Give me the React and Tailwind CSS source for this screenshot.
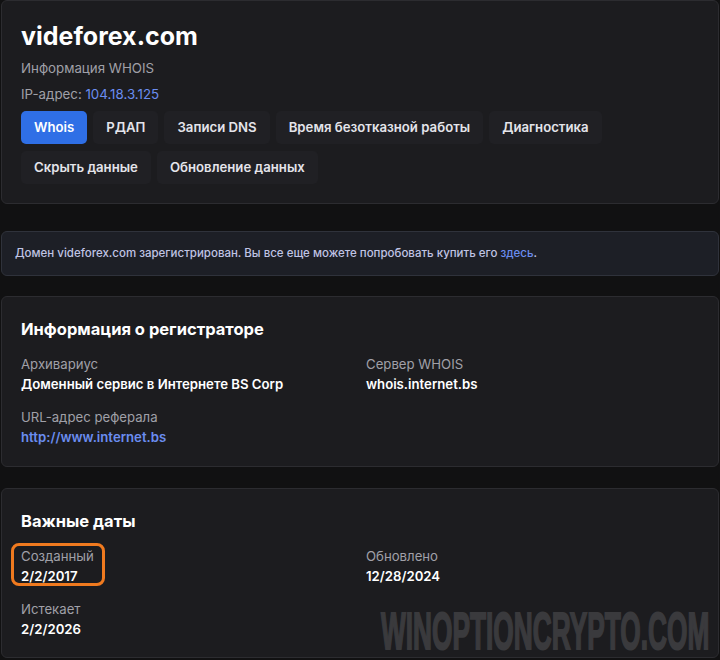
import React from 'react';

const tabRows = [
  ['Whois', 'РДАП', 'Записи DNS', 'Время безотказной работы', 'Диагностика'],
  ['Скрыть данные', 'Обновление данных'],
];

function Field({ label, value, link }) {
  return (
    <div>
      <div className="text-[13.2px] leading-[20px] text-[#a0a0a8]">{label}</div>
      <div className={`text-[13.2px] leading-[20px] font-semibold ${link ? 'text-[#6b8df0]' : 'text-white'}`}>{value}</div>
    </div>
  );
}

export default function App() {
  return (
    <div
      className="relative min-h-[660px] bg-[#111112] flex flex-col"
      style={{ fontFamily: 'Inter, "Noto Sans", sans-serif' }}
    >
      {/* Header card */}
      <div className="mx-[1px] bg-[#1c1c1f] border border-[#2c2c30] rounded-[6px] px-[19px] pt-[15px] pb-[19px]">
        <h1 className="text-[25px] leading-[40px] font-bold text-white">videforex.com</h1>
        <p className="mt-[2px] text-[13.3px] leading-[20px] text-[#a0a0a8]">Информация WHOIS</p>
        <p className="mt-[6px] text-[13.3px] leading-[20px] text-[#a0a0a8]">
          IP-адрес: <span className="text-[#6b8df0]">104.18.3.125</span>
        </p>
        <div className="mt-[7px] flex flex-col gap-[7px]">
          {tabRows.map((row, r) => (
            <div key={r} className="flex gap-[6px]">
              {row.map((t) => (
                <button
                  key={t}
                  className={`h-[33px] px-[13px] rounded-[5px] text-[13.2px] font-semibold ${
                    t === 'Whois' ? 'bg-[#2f6fe6] text-white' : 'bg-[#202024] text-[#e4e4ea]'
                  }`}
                >
                  {t}
                </button>
              ))}
            </div>
          ))}
        </div>
      </div>

      {/* Notice */}
      <div className="mt-[27px] mx-[1px] bg-[#1d1f26] border border-[#2f323b] rounded-[6px] px-[13px] h-[45px] flex items-center">
        <p className="text-[11.5px] font-medium text-[#c0c4e4]">
          Домен videforex.com зарегистрирован. Вы все еще можете попробовать купить его{' '}
          <span className="text-[#6b8df0]">здесь</span>.
        </p>
      </div>

      {/* Registrar */}
      <div className="mt-[20px] mx-[1px] bg-[#1c1c1f] border border-[#2c2c30] rounded-[6px] px-[19px] pt-[18px] pb-[19px]">
        <h2 className="text-[16.5px] leading-[28px] font-bold text-white">Информация о регистраторе</h2>
        <div className="mt-[11px] grid grid-cols-2 gap-x-[12px] gap-y-[13px]">
          <Field label="Архивариус" value="Доменный сервис в Интернете BS Corp" />
          <Field label="Сервер WHOIS" value="whois.internet.bs" />
          <Field label="URL-адрес реферала" value="http://www.internet.bs" link />
        </div>
      </div>

      {/* Dates */}
      <div className="mt-[21px] mx-[1px] bg-[#1c1c1f] border border-[#2c2c30] rounded-[6px] px-[19px] pt-[18px] pb-[18px]">
        <h2 className="text-[16.5px] leading-[28px] font-bold text-white">Важные даты</h2>
        <div className="mt-[11px] grid grid-cols-2 gap-x-[12px] gap-y-[13px]">
          <div className="relative">
            <Field label="Созданный" value="2/2/2017" />
            <div className="absolute left-[-10px] top-[-3px] w-[94px] h-[43px] border-[3px] border-[#f07a1f] rounded-[8px]" />
          </div>
          <Field label="Обновлено" value="12/28/2024" />
          <Field label="Истекает" value="2/2/2026" />
        </div>
      </div>

      {/* Watermark */}
      <div className="absolute left-[381px] top-[604px] w-[328px] h-[54px] pointer-events-none">
        <span
          className="block origin-left scale-x-[0.505] whitespace-nowrap text-[52px] leading-[54px] font-black text-[#3a3a3d]"
          style={{ fontFamily: '"Liberation Sans", "DejaVu Sans", sans-serif', WebkitTextStroke: '2px #3a3a3d' }}
        >
          WINOPTIONCRYPTO.COM
        </span>
      </div>
    </div>
  );
}
